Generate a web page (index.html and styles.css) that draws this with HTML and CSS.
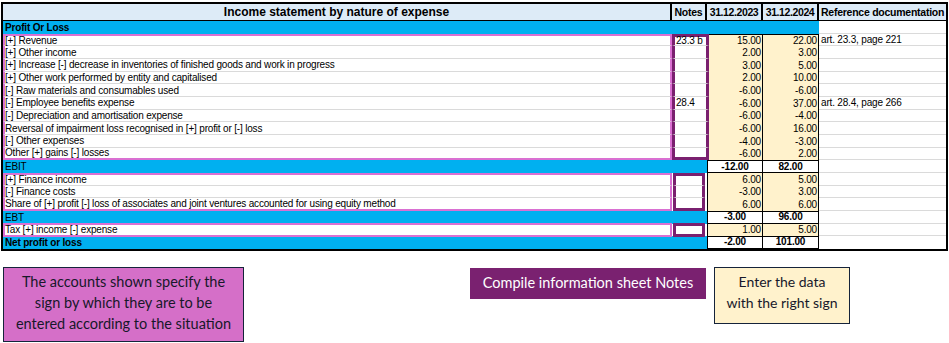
FILE: index.html
```html
<!DOCTYPE html>
<html lang="en">
<head>
<meta charset="utf-8">
<title>Income statement by nature of expense</title>
<link rel="stylesheet" href="styles.css">
</head>
<body>
<div class="sheet">
  <div class="c hd title">Income statement by nature of expense</div>
  <div class="c hd ctr">Notes</div>
  <div class="c hd ctr date">31.12.2023</div>
  <div class="c hd ctr date">31.12.2024</div>
  <div class="c hd last-h">Reference documentation</div>

  <div class="c sec span4 b">Profit Or Loss</div>
  <div class="c refc"></div>

  <div class="c lab pk pk-top">[+] Revenue</div>
  <div class="c note pu wide pu-top">23.3 b</div>
  <div class="c num y23 ytop">15.00</div>
  <div class="c num ytop">22.00</div>
  <div class="c refc">art. 23.3, page 221</div>

  <div class="c lab pk">[+] Other income</div>
  <div class="c note pu wide"></div>
  <div class="c num y23">2.00</div>
  <div class="c num">3.00</div>
  <div class="c refc"></div>

  <div class="c lab pk">[+] Increase [-] decrease in inventories of finished goods and work in progress</div>
  <div class="c note pu wide"></div>
  <div class="c num y23">3.00</div>
  <div class="c num">5.00</div>
  <div class="c refc"></div>

  <div class="c lab pk">[+] Other work performed by entity and capitalised</div>
  <div class="c note pu wide"></div>
  <div class="c num y23">2.00</div>
  <div class="c num">10.00</div>
  <div class="c refc"></div>

  <div class="c lab pk">[-] Raw materials and consumables used</div>
  <div class="c note pu wide"></div>
  <div class="c num y23">-6.00</div>
  <div class="c num">-6.00</div>
  <div class="c refc"></div>

  <div class="c lab pk">[-] Employee benefits expense</div>
  <div class="c note pu wide">28.4</div>
  <div class="c num y23">-6.00</div>
  <div class="c num">37.00</div>
  <div class="c refc">art. 28.4, page 266</div>

  <div class="c lab pk">[-] Depreciation and amortisation expense</div>
  <div class="c note pu wide"></div>
  <div class="c num y23">-6.00</div>
  <div class="c num">-4.00</div>
  <div class="c refc"></div>

  <div class="c lab pk">Reversal of impairment loss recognised in [+] profit or [-] loss</div>
  <div class="c note pu wide"></div>
  <div class="c num y23">-6.00</div>
  <div class="c num">16.00</div>
  <div class="c refc"></div>

  <div class="c lab pk">[-] Other expenses</div>
  <div class="c note pu wide"></div>
  <div class="c num y23">-4.00</div>
  <div class="c num">-3.00</div>
  <div class="c refc"></div>

  <div class="c lab pk pk-bot">Other [+] gains [-] losses</div>
  <div class="c note pu wide pu-bot"></div>
  <div class="c num y23">-6.00</div>
  <div class="c num">2.00</div>
  <div class="c refc"></div>

  <div class="c sec span2">EBIT</div>
  <div class="c tot y23">-12.00</div>
  <div class="c tot">82.00</div>
  <div class="c refc"></div>

  <div class="c lab pk pk-top">[+] Finance income</div>
  <div class="c note pu pu-top narrow"></div>
  <div class="c num y23">6.00</div>
  <div class="c num">5.00</div>
  <div class="c refc"></div>

  <div class="c lab pk">[-] Finance costs</div>
  <div class="c note pu narrow"></div>
  <div class="c num y23">-3.00</div>
  <div class="c num">3.00</div>
  <div class="c refc"></div>

  <div class="c lab pk pk-bot">Share of [+] profit [-] loss of associates and joint ventures accounted for using equity method</div>
  <div class="c note pu pu-bot narrow"></div>
  <div class="c num y23">6.00</div>
  <div class="c num">6.00</div>
  <div class="c refc"></div>

  <div class="c sec span2">EBT</div>
  <div class="c tot y23">-3.00</div>
  <div class="c tot">96.00</div>
  <div class="c refc"></div>

  <div class="c lab pk pk-top pk-bot single">Tax [+] income [-] expense</div>
  <div class="c note pu pu-top pu-bot narrow single"></div>
  <div class="c num y23">1.00</div>
  <div class="c num">5.00</div>
  <div class="c refc"></div>

  <div class="c sec span2 b">Net profit or loss</div>
  <div class="c tot y23">-2.00</div>
  <div class="c tot">101.00</div>
  <div class="c refc nogrid"></div>
</div>

<div class="callouts">
  <div class="box box-pink">The accounts shown specify the<br>sign by which they are to be<br>entered according to the situation</div>
  <div class="box box-compile">Compile information sheet Notes</div>
  <div class="box box-enter">Enter the data<br>with the right sign</div>
</div>
</body>
</html>
```

FILE: styles.css
```css
html, body {
  margin: 0;
  padding: 0;
  background: #ffffff;
}

body {
  font-family: "Liberation Sans", Arial, sans-serif;
  color: #000;
}

.sheet {
  display: grid;
  grid-template-columns: 669px 35px 56px 56px 127px;
  grid-template-rows: 17px repeat(18, 12.67px);
  width: max-content;
  margin: 2px 0 0 1px;
  border: 2px solid #000;
}

.c {
  box-sizing: border-box;
  font-size: 10px;
  line-height: 10px;
  letter-spacing: -0.18px;
  white-space: nowrap;
  overflow: hidden;
  padding: 1px 2px 0;
  display: flex;
  align-items: center;
}

.hd {
  background: #ddebf7;
  font-weight: bold;
  border-right: 2px solid #000;
  border-bottom: 1px solid #000;
  font-size: 10.5px;
  letter-spacing: -0.25px;
  padding-top: 0;
}

.hd.title {
  justify-content: center;
  font-size: 12px;
  letter-spacing: 0;
}

.hd.ctr {
  justify-content: center;
  padding: 0;
}

.hd.date {
  letter-spacing: -0.4px;
}

.hd.last-h {
  border-right: none;
  padding-left: 2px;
  overflow: visible;
}

.b { font-weight: bold; }

.sec {
  background: #00b0f0;
}

.span4 { grid-column: span 4; }
.span2 { grid-column: span 2; }

.lab {
  background: #fff;
  border-bottom: 1px solid #dadada;
  overflow: visible;
}

.pk {
  border-left: 2px solid #da70d2;
  border-right: 2px solid #da70d2;
  padding-left: 0;
}

.pk-top { border-top: 2px solid #da70d2; }
.pk-bot { border-bottom: 2px solid #da70d2; }

.note {
  background: #fff;
  border-bottom: 1px solid #dadada;
  padding-left: 1px;
  overflow: visible;
  letter-spacing: -0.2px;
}

.pu {
  border-left: 3px solid #7a206f;
  border-right: 3px solid #7a206f;
}

.wide {
  position: relative;
  z-index: 1;
  margin-right: -2px;
}

.pu-top { border-top: 3px solid #7a206f; }
.pu-bot { border-bottom: 3px solid #7a206f; }

.narrow {
  margin: 0 2px 0 1px;
}

.single {
  position: relative;
  z-index: 1;
  margin-top: -1px;
  margin-bottom: -1px;
  padding-top: 0;
}

.num {
  background: #fff2cc;
  border-right: 1px solid #000;
  justify-content: flex-end;
  padding: 1px 1px 0 0;
}

.y23 {
  border-left: 1px solid #000;
}

.ytop {
  border-top: 1px solid #000;
}

.tot {
  background: #fff;
  font-weight: bold;
  justify-content: center;
  border-right: 1px solid #000;
  border-top: 1px solid #000;
  border-bottom: 1px solid #000;
  padding: 0;
}

.refc {
  background: #fff;
  border-bottom: 1px solid #dadada;
  padding-left: 2px;
}

.refc.nogrid { border-bottom: none; }

.callouts {
  display: flex;
  align-items: flex-start;
  margin: 16px 0 0 3px;
  font-family: Lato, "Open Sans", sans-serif;
  font-size: 14.5px;
  line-height: 21px;
}

.box {
  box-sizing: border-box;
  text-align: center;
  white-space: nowrap;
}

.box-pink {
  width: 241px;
  height: 75px;
  padding-top: 3px;
  background: #d56fc8;
  border: 1px solid #15233a;
  color: #17182a;
}

.box-compile {
  margin: 1px 0 0 226px;
  width: 236px;
  height: 31px;
  padding-top: 4px;
  background: #7a2170;
  color: #ffffff;
}

.box-enter {
  margin-left: 8px;
  width: 136px;
  height: 57px;
  padding-top: 3px;
  background: #fff2cc;
  border: 1px solid #15233a;
  color: #17182a;
  font-size: 14px;
}
```
